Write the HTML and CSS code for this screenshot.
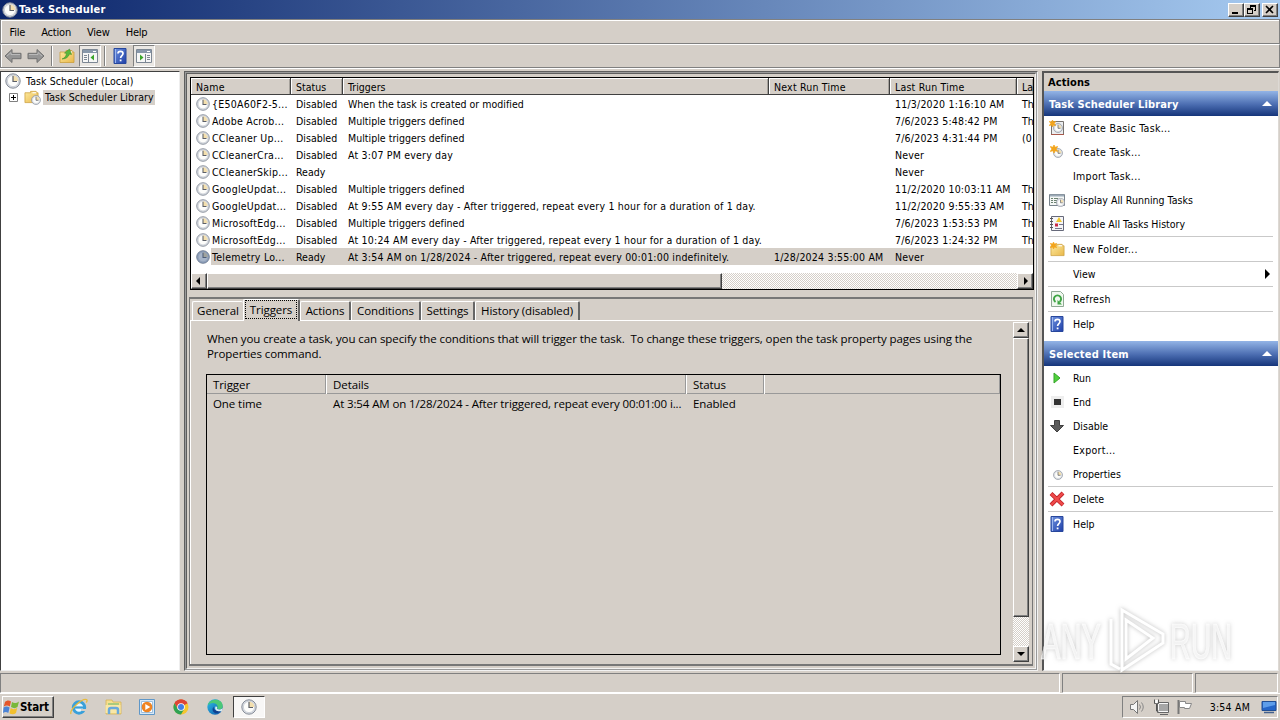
FILE: index.html
```html
<!DOCTYPE html>
<html lang="en">
<head>
    <meta charset="UTF-8">
    <meta name="viewport" content="width=device-width, initial-scale=1.0">
    <title>Task Scheduler</title>
    <link rel="stylesheet" href="styles.css">
</head>
<body>
    <!-- Shared icons -->
    <svg class="defs" width="0" height="0">
        <defs>
            <linearGradient id="folderFill" x1="0" y1="0" x2="1" y2="1"><stop offset="0" stop-color="#fdeaa0"/><stop offset="1" stop-color="#e9b84a"/></linearGradient>
            <linearGradient id="helpFill" x1="0" y1="0" x2="1" y2="1"><stop offset="0" stop-color="#6f93e0"/><stop offset="1" stop-color="#1f3fa8"/></linearGradient>
            <linearGradient id="edgeFill" x1="0" y1="0" x2="1" y2="1"><stop offset="0" stop-color="#2fc2e8"/><stop offset="1" stop-color="#0b4fa8"/></linearGradient>
        </defs>
        <symbol id="clock" viewBox="0 0 16 16">
            <circle cx="8" cy="8" r="7.2" fill="#d9dde4" stroke="#858b96"/>
            <circle cx="8" cy="8" r="5.6" fill="#fdfdfb" stroke="#b9bec8" stroke-width=".6"/>
            <path d="M8 8V2.6A5.4 5.4 0 0 1 13.4 8z" fill="#f3dfae"/>
            <path d="M8 3v5.5h4" fill="none" stroke="#5d6068" stroke-width="1.2"/>
        </symbol>
        <symbol id="help" viewBox="0 0 16 16">
            <path d="M2 .5h12v15H2z" fill="url(#helpFill)" stroke="#27479c"/>
            <path d="M3.5 1v14" stroke="#9db7ee"/>
            <path d="M6 5.6c0-3 5-3 5 0 0 2-2.4 2-2.4 4.4" fill="none" stroke="#fff" stroke-width="1.7"/>
            <path d="M7.7 11.5h1.8v1.8H7.7z" fill="#fff"/>
        </symbol>
        <symbol id="folder" viewBox="0 0 16 16">
            <path d="M1 4h6V2.5h6V4h2v10.5H1z" fill="url(#folderFill)" stroke="#cc9f3c" stroke-width=".8"/>
            <path d="M9 4h4" stroke="#fff" stroke-width="1.2"/>
        </symbol>
        <symbol id="star" viewBox="0 0 8 8">
            <path d="M4 0l1 2.3L7.7 1.6 6 4l1.7 2.4L5 5.7 4 8 3 5.7.3 6.4 2 4 .3 1.6 3 2.3z" fill="#f3a51c" stroke="#f3a51c" stroke-width=".8"/>
        </symbol>
        <symbol id="arrow" viewBox="0 0 18 16">
            <path d="M1 8l7-6.5v3.800h9v5.400H8v3.800z" fill="#959595" stroke="#707070"/>
            <path d="M3 8l4-3.500V6.500h9" fill="none" stroke="#b9b9b9"/>
        </symbol>
    </svg>

    <div class="screen">
        <div class="titlebar">
            <svg class="app-icon" width="16" height="16"><use href="#clock"/></svg>
            <h1>Task Scheduler</h1>
            <div class="win-buttons">
                <span class="win-btn"><svg width="14" height="12"><path d="M3 8h6v2H3z"/></svg></span>
                <span class="win-btn"><svg width="14" height="12"><path d="M5 1h6v6H9V6h1V3H6v1H5zM2 4h6v6H2zM3 6v3h4V6z" fill-rule="evenodd"/></svg></span>
                <span class="win-btn close"><svg width="14" height="12"><path d="M3 2l7 7M10 2L3 9" stroke="#000" stroke-width="1.6"/></svg></span>
            </div>
        </div>

        <nav class="menubar"><span>File</span><span>Action</span><span>View</span><span>Help</span></nav>

        <div class="toolbar">
            <svg width="18" height="16"><use href="#arrow"/></svg>
            <svg class="forward" width="18" height="16"><use href="#arrow"/></svg>
            <i class="tool-sep"></i>
            <svg class="up" width="16" height="16"><use href="#folder"/><path d="M3 11c3-1 4-3 4.500-5.500L5.500 5l5-4 2 5.500-2-.5C9.500 9 7 11 3 11z" fill="#58b83a" stroke="#38872a" stroke-width=".5"/></svg>
            <span class="tool-pressed"><svg width="18" height="16"><path d="M1.500 1.500h15v13h-15z" fill="#f6f6f6" stroke="#7c8794"/><path d="M2 2h14v3H2z" fill="#8797aa"/><path d="M12 3.500h3" stroke="#fff"/><path d="M7.500 6v8M3 7.500h3M3 9.500h3M3 11.500h3" stroke="#7c8794"/><path d="M13 6.500v6l-3.500-3z" fill="#3ba52c"/></svg></span>
            <i class="tool-sep second"></i>
            <svg class="help" width="16" height="16"><use href="#help"/></svg>
            <span class="tool-pressed"><svg width="18" height="16"><path d="M1.500 1.500h15v13h-15z" fill="#f6f6f6" stroke="#7c8794"/><path d="M2 2h14v3H2z" fill="#8797aa"/><path d="M12 3.500h3" stroke="#fff"/><path d="M10.500 6v8M12 7.500h3M12 9.500h3M12 11.500h3" stroke="#7c8794"/><path d="M5 6.500v6l3.500-3z" fill="#3ba52c"/></svg></span>
        </div>

        <main class="workspace">
            <aside class="tree">
                <div class="tree-root"><svg width="16" height="16"><use href="#clock"/></svg><span>Task Scheduler (Local)</span></div>
                <div class="tree-child">
                    <svg width="9" height="9"><path d="M.5.5h8v8h-8z" fill="#fff" stroke="#808080"/><path d="M2 4.500h5M4.500 2v5" stroke="#000"/></svg>
                    <svg class="lib" width="17" height="16"><use href="#folder" width="15" height="15"/><use href="#clock" x="7" y="6" width="10" height="10"/></svg>
                    <span>Task Scheduler Library</span>
                </div>
            </aside>

            <section class="center">
                <div class="task-list">
                    <div class="row head"><span>Name</span><span>Status</span><span>Triggers</span><span>Next Run Time</span><span>Last Run Time</span><span>La</span></div>
                    <div class="row"><span><svg width="14" height="14"><use href="#clock"/></svg>{E50A60F2-5...</span><span>Disabled</span><span>When the task is created or modified</span><span></span><span>11/3/2020 1:16:10 AM</span><span>Th</span></div>
                    <div class="row"><span><svg width="14" height="14"><use href="#clock"/></svg>Adobe Acrob...</span><span>Disabled</span><span>Multiple triggers defined</span><span></span><span>7/6/2023 5:48:42 PM</span><span>Th</span></div>
                    <div class="row"><span><svg width="14" height="14"><use href="#clock"/></svg>CCleaner Up...</span><span>Disabled</span><span>Multiple triggers defined</span><span></span><span>7/6/2023 4:31:44 PM</span><span>(0</span></div>
                    <div class="row"><span><svg width="14" height="14"><use href="#clock"/></svg>CCleanerCra...</span><span>Disabled</span><span class="schedule">At 3:07 PM every day</span><span></span><span>Never</span><span></span></div>
                    <div class="row"><span><svg width="14" height="14"><use href="#clock"/></svg>CCleanerSkip...</span><span>Ready</span><span></span><span></span><span>Never</span><span></span></div>
                    <div class="row"><span><svg width="14" height="14"><use href="#clock"/></svg>GoogleUpdat...</span><span>Disabled</span><span>Multiple triggers defined</span><span></span><span>11/2/2020 10:03:11 AM</span><span>Th</span></div>
                    <div class="row"><span><svg width="14" height="14"><use href="#clock"/></svg>GoogleUpdat...</span><span>Disabled</span><span class="schedule">At 9:55 AM every day - After triggered, repeat every 1 hour for a duration of 1 day.</span><span></span><span>11/2/2020 9:55:33 AM</span><span>Th</span></div>
                    <div class="row"><span><svg width="14" height="14"><use href="#clock"/></svg>MicrosoftEdg...</span><span>Disabled</span><span>Multiple triggers defined</span><span></span><span>7/6/2023 1:53:53 PM</span><span>Th</span></div>
                    <div class="row"><span><svg width="14" height="14"><use href="#clock"/></svg>MicrosoftEdg...</span><span>Disabled</span><span class="schedule">At 10:24 AM every day - After triggered, repeat every 1 hour for a duration of 1 day.</span><span></span><span>7/6/2023 1:24:32 PM</span><span>Th</span></div>
                    <div class="row selected"><span><svg width="14" height="14"><use href="#clock"/><circle cx="7" cy="7" r="6.500" fill="#3c5a8c" opacity=".45"/></svg>Telemetry Lo...</span><span>Ready</span><span class="schedule">At 3:54 AM on 1/28/2024 - After triggered, repeat every 00:01:00 indefinitely.</span><span>1/28/2024 3:55:00 AM</span><span>Never</span><span></span></div>
                    <div class="hscroll">
                        <span class="sbtn"><svg width="12" height="12"><path d="M7 2v8L3 6z"/></svg></span>
                        <span class="thumb"></span>
                        <span class="sbtn"><svg width="12" height="12"><path d="M5 2v8l4-4z"/></svg></span>
                    </div>
                </div>

                <div class="details">
                    <div class="tabs"><span class="tab general">General</span><span class="tab active"><b>Triggers</b></span><span class="tab actions-tab">Actions</span><span class="tab conditions">Conditions</span><span class="tab settings">Settings</span><span class="tab history">History (disabled)</span></div>
                    <div class="tab-page">
                        <div class="page-body">
                            <p><span>When you create a task, you can specify the conditions that will trigger the task.&nbsp; To change these triggers, open the task property pages using the</span><br>Properties command.</p>
                            <div class="trigger-table">
                                <div class="trow thead"><span>Trigger</span><span>Details</span><span>Status</span><span></span></div>
                                <div class="trow"><span>One time</span><span class="when">At 3:54 AM on 1/28/2024 - After triggered, repeat every 00:01:00 i...</span><span>Enabled</span><span></span></div>
                            </div>
                        </div>
                        <div class="vscroll">
                            <span class="sbtn"><svg width="12" height="12"><path d="M2 8h8L6 4z"/></svg></span>
                            <span class="thumb"></span>
                            <span class="sbtn"><svg width="12" height="12"><path d="M2 4h8L6 8z"/></svg></span>
                        </div>
                    </div>
                </div>
            </section>

            <aside class="actions">
                <div class="actions-title">Actions</div>
                <div class="group-head"><span>Task Scheduler Library</span><svg width="10" height="6"><path d="M0 5l5-5 5 5z" fill="#fff"/></svg></div>
                <ul>
                    <li><svg width="16" height="16"><path d="M2.500 1.500h12v13h-12z" fill="#eceef0" stroke="#77736f"/><path d="M2 14.500h13" stroke="#a9594b"/><use href="#clock" x="4" y="3" width="10" height="10"/><use href="#star" width="7" height="7"/></svg><span class="dots">Create Basic Task...</span></li>
                    <li><svg width="16" height="16"><use href="#clock" x="4" y="4" width="10" height="10"/><use href="#star" x="1" y="1" width="8" height="8"/></svg><span class="dots">Create Task...</span></li>
                    <li><i></i><span class="dots">Import Task...</span></li>
                    <li><svg width="16" height="16"><path d="M.5 2.500h15v11H.5z" fill="#f4f7f5" stroke="#78838c"/><path d="M1 3.500h14" stroke="#9ba9b6" stroke-width="2"/><path d="M2 6.500h2M5 6.500h4M2 8.500h2M5 8.500h3M2 10.500h2M5 10.500h3" stroke="#6c8271"/><use href="#clock" x="7" y="6" width="9" height="9"/></svg><span>Display All Running Tasks</span></li>
                    <li><svg width="16" height="16"><path d="M2.500.5h12v14h-12z" fill="#f5f5f7" stroke="#66697a"/><path d="M1 2.500h3M1 5.500h3M1 8.500h3M1 11.500h3" stroke="#555"/><path d="M10 1l3 5H7z" fill="#f1c82f"/><path d="M6 7.500h3v3H6z" fill="#c82b44"/><path d="M10 8.500h4M6 12.500h7" stroke="#77778a"/></svg><span>Enable All Tasks History</span></li>
                    <li class="line"><svg width="16" height="16"><use href="#folder" x="1" y="1" width="15" height="15"/><use href="#star" x="1" y="1" width="7" height="7"/></svg><span class="dots">New Folder...</span></li>
                    <li class="line"><i></i><span>View</span><svg class="sub" width="5" height="10"><path d="M0 0l5 5-5 5z"/></svg></li>
                    <li class="line"><svg width="16" height="16"><path d="M2.500.5h9l3 3v12h-12z" fill="#f0f8ef" stroke="#8fa894"/><path d="M6.500 11a3.600 3.600 0 1 1 4 0" fill="none" stroke="#3da443" stroke-width="1.900"/><path d="M8.500 9v4.500h4.500z" fill="#3da443"/></svg><span class="dots">Refresh</span></li>
                    <li class="line"><svg width="16" height="16"><use href="#help"/></svg><span>Help</span></li>
                </ul>
                <div class="group-head second"><span>Selected Item</span><svg width="10" height="6"><path d="M0 5l5-5 5 5z" fill="#fff"/></svg></div>
                <ul>
                    <li><svg width="16" height="16"><path d="M5 3l6 5-6 5z" fill="#4fd13c" stroke="#36a52a"/></svg><span>Run</span></li>
                    <li><svg width="16" height="16"><path d="M2 2h13v12H2z" fill="#eeeeee"/><path d="M5 5h7v6H5z" fill="#333"/></svg><span>End</span></li>
                    <li><svg width="16" height="16"><path d="M5.500 2.500h5v5h4L8 14 1.500 7.500h4z" fill="#5b5b5b" stroke="#404040"/></svg><span>Disable</span></li>
                    <li><i></i><span class="dots">Export...</span></li>
                    <li><svg width="16" height="16"><use href="#clock" x="4" y="4" width="10" height="10"/></svg><span>Properties</span></li>
                    <li class="line"><svg width="16" height="16"><path d="M2 2.500L14 14M14 2L2 14" stroke="#b91c22" stroke-width="4"/><path d="M2.200 2.700L13.800 13.800M13.800 2.200L2.200 13.800" stroke="#ee4a4a" stroke-width="2.600"/></svg><span>Delete</span></li>
                    <li class="line"><svg width="16" height="16"><use href="#help"/></svg><span>Help</span></li>
                </ul>
            </aside>
        </main>

        <footer class="statusbar"><span></span><span></span><span></span></footer>

        <div class="taskbar">
            <div class="start"><svg width="17" height="16"><path d="M2 3c2-2 4-2 6-.5L6.800 7.500C5 6 3 6 .8 7.500z" fill="#e4562b"/><path d="M9 3c2 1.500 4 1.500 7-.5L14.500 8c-2 1.500-4 1.500-6.500 0z" fill="#78b83a"/><path d="M.6 8.600c2-1.600 4-1.300 6 0L5.300 14C3.500 12.600 2 12.600 0 14z" fill="#4b83d6"/><path d="M7.700 9c2 1.500 4 1.500 6.500 0L13 14c-2 1.500-4 1.500-6.500.5z" fill="#f2c02e"/></svg><span>Start</span></div>
            <svg class="launch" width="18" height="18"><circle cx="9" cy="9.500" r="5.700" fill="#eaf6fd" stroke="#3aa0da" stroke-width="3"/><path d="M4 9.500h11" stroke="#3aa0da" stroke-width="2.200"/><path d="M1 16C-1 12 12 0 16.500 1.500c1 .5.5 2-.3 3" fill="none" stroke="#e8bb3c" stroke-width="1.300"/><path d="M11 12h5" stroke="#d5cfc8" stroke-width="2"/></svg>
            <svg class="launch" width="18" height="18"><path d="M2 2h6l1 2h8v12H2z" fill="#f6df8e" stroke="#d5b357" stroke-width=".8"/><path d="M4 5h11v4H4z" fill="#aacb7c"/><path d="M1.500 7h15v8h-15z" fill="#f8e7a6"/><path d="M5 16v-4q0-2 2-2h5q2 0 2 2v4" fill="none" stroke="#68a9dc" stroke-width="2.500"/></svg>
            <svg class="launch" width="18" height="18"><path d="M1.500 1.500h15v15h-15z" fill="#d8e9f7" stroke="#5f97c8"/><path d="M3.500 3.500h11v11h-11z" fill="#fff" stroke="#9dbfdd"/><circle cx="9" cy="9" r="5.300" fill="#ef8422"/><path d="M7.300 6l5 3-5 3z" fill="#fff"/></svg>
            <svg class="launch" width="18" height="18"><circle cx="9" cy="9" r="7.500" fill="#f5c62f"/><path d="M9 9L2.500 5.200A7.500 7.500 0 0 1 15.500 5.200z" fill="#dd4436"/><path d="M9 5.200h6.500A7.500 7.500 0 0 0 2.500 5.200L5.700 11z" fill="#dd4436"/><path d="M2.500 5.200A7.500 7.500 0 0 0 9 16.500l3.200-5.600H5.800z" fill="#2fa253"/><circle cx="9" cy="9" r="3.800" fill="#fff"/><circle cx="9" cy="9" r="3" fill="#427fe5"/></svg>
            <svg class="launch" width="18" height="18"><circle cx="9" cy="9" r="7.700" fill="url(#edgeFill)"/><path d="M2 6C5 0 17 0 16.700 8.500c0 3-4 3.500-5.700 2 2-2.500-1-5.500-4-5.500Q4 5 2 7z" fill="#4bc878"/><path d="M8 8.500c-1.500 3 3 5.500 7 3.800-1 1.500-2 2.500-3.500 3C7 16 5 11 8 8.500z" fill="#10408f"/><path d="M9.500 8.500c2-.5 2 1.500 1.300 2.300 2 1.300 4.700.7 6-.8l-1 3c-3 1-8 0-6.300-4.500z" fill="#d9eef5"/></svg>
            <div class="task-btn"><svg width="16" height="16"><use href="#clock"/></svg></div>
            <div class="tray">
                <svg width="17" height="16"><path d="M1.500 5.500h3l4-4v13l-4-4h-3z" fill="#f5f5f5" stroke="#777"/><path d="M10.500 5.500q2 2.500 0 5M12.500 3.500q3.500 4.500 0 9" fill="none" stroke="#888"/></svg>
                <svg width="17" height="16"><path d="M5.500 4.500h10v8h-10z" fill="#a6a6a6" stroke="#f8f8f8"/><path d="M4.500 3.500h11v10h-11z" fill="none" stroke="#666"/><path d="M7 15.500h8" stroke="#666"/><path d="M1.500.5v4h4v-4M3.500 5v7h2" fill="none" stroke="#555"/><path d="M2.500 1v3h2V1" fill="#fff" stroke="#fff" stroke-width=".5"/></svg>
                <svg width="17" height="16"><path d="M1.500 1v14" stroke="#777" stroke-width="2"/><path d="M2.500 2.500h6v2h6l-2 5h-5v-1h-5z" fill="#fff" stroke="#888"/></svg>
                <time>3:54 AM</time>
                <svg width="16" height="16"><path d="M1 2.500h14v9H1z" fill="#2465c8" stroke="#204e94"/><path d="M2 3h12v3L2 9z" fill="#5d9dea"/><path d="M3 13.500h10" stroke="#43608d" stroke-width="1.500"/></svg>
            </div>
        </div>

        <svg class="watermark" width="230" height="72">
            <text x="1" y="54" textLength="60" lengthAdjust="spacingAndGlyphs">ANY</text>
            <path d="M82 5L123 29v9L82 65zM71 14v45l9 5M86 15l27 18-27 21z"/>
            <text x="130" y="54" textLength="62" lengthAdjust="spacingAndGlyphs">RUN</text>
        </svg>
    </div>
</body>
</html>
```
FILE: styles.css
```css
* {
    margin: 0;
    padding: 0;
    box-sizing: border-box;
}

:root {
    --face: #d5cfc8;
    --dark: #808080;
    --darker: #404040;
}

body {
    font-family: 'DejaVu Sans Condensed', 'DejaVu Sans', sans-serif;
    font-stretch: condensed;
    font-size: 10.5px;
    letter-spacing: 0.02px;
    color: #000;
    background: var(--face);
    overflow: hidden;
}

svg {
    display: block;
    flex: none;
}

.defs {
    position: absolute;
}

.screen {
    position: relative;
    width: 1280px;
    height: 720px;
    display: flex;
    flex-direction: column;
    background: var(--face);
    white-space: nowrap;
}

/* Title bar */
.titlebar {
    height: 19px;
    flex: none;
    display: flex;
    align-items: center;
    padding: 0 2px;
    background: linear-gradient(90deg, #0a246a, #a6caf0);
}

.titlebar h1 {
    margin-left: 1px;
    color: #fff;
    font-size: 11px;
    letter-spacing: 0.2px;
    flex: 1;
}

.win-buttons {
    display: flex;
}

.win-btn {
    width: 16px;
    height: 14px;
    background: var(--face);
    border: 1px solid;
    border-color: #fff var(--darker) var(--darker) #fff;
    box-shadow: inset -1px -1px var(--dark);
    overflow: hidden;
}

.win-btn.close {
    margin-left: 2px;
}

/* Menu and toolbar */
.menubar {
    height: 25px;
    flex: none;
    display: flex;
    align-items: center;
    gap: 16px;
    padding: 1px 8.5px 0;
    border: 1px solid var(--dark);
    box-shadow: inset 1px 1px #fff;
    font-size: 11px;
    letter-spacing: -0.2px;
}

.toolbar {
    height: 24px;
    flex: none;
    display: flex;
    align-items: center;
    padding-left: 3px;
    border: 1px solid var(--dark);
    border-top-color: #fff;
    box-shadow: inset 1px 0 #fff;
}

.forward {
    margin-left: 5px;
    transform: scaleX(-1);
}

.tool-sep {
    width: 2px;
    height: 20px;
    margin: 0 6px 0 6px;
    border-left: 1px solid var(--dark);
    border-right: 1px solid #fff;
}

.toolbar .up {
    margin-right: 4px;
}

.tool-pressed {
    width: 22px;
    height: 22px;
    padding: 2px 1px;
    background: #eae7e3;
    border: 1px solid;
    border-color: var(--dark) #fff #fff var(--dark);
}

.tool-sep.second {
    margin: 0 6px 0 3px;
}

.toolbar .help {
    margin-right: 5px;
}

/* Three panes */
.workspace {
    height: 603px;
    flex: none;
    display: grid;
    grid-template-columns: 180px 854px 237px;
    column-gap: 4px;
    padding-top: 2px;
    border-top: 1px solid #fff;
}

.tree {
    background: #fff;
    border: 1px solid var(--darker);
    border-right-color: #eee;
    border-bottom-color: #eee;
    padding-top: 1px;
}

.tree-root,
.tree-child {
    height: 16px;
    display: flex;
    align-items: center;
    letter-spacing: 0.1px;
}

.tree-root {
    padding-left: 4px;
}

.tree-root span {
    margin-left: 5px;
}

.tree-child {
    padding-left: 8px;
}

.tree-child .lib {
    margin-left: 6px;
}

.tree-child span {
    height: 15px;
    line-height: 15px;
    margin-left: 2px;
    padding: 0 1px 0 2px;
    background: var(--face);
}

.center {
    border: 3px solid #5e5e5e;
    border-right-color: #f2f2f2;
    border-bottom-color: #f2f2f2;
    outline: 1px solid #9a9a9a;
    outline-offset: -2px;
    padding: 3px 2px 0 2px;
    min-width: 0;
}

.task-list {
    width: 844px;
    height: 213px;
    margin-left: 1px;
    border: 1px solid #000;
    background: #fff;
    overflow: hidden;
}

.row {
    height: 17px;
    display: grid;
    grid-template-columns: 100px 52px 426px 121px 127px 16px;
    align-items: center;
}

.row span {
    height: 17px;
    line-height: 18px;
    padding-left: 5px;
    overflow: hidden;
}

.row span:first-child {
    display: flex;
    align-items: center;
    gap: 2px;
    letter-spacing: 0.25px;
}

.row .schedule,
.row span:nth-child(4),
.row span:nth-child(5) {
    letter-spacing: 0.2px;
}

.row.head {
    background: var(--face);
    border-bottom: 1px solid var(--darker);
    box-shadow: inset 0 1px #fff;
}

.row.head span {
    height: 16px;
    border-right: 1px solid var(--darker);
    box-shadow: inset 1px 1px #fff, inset -1px 0 #a5a19b;
}

.row.head span:first-child {
    display: block;
}

.row.head span:last-child {
    border: 0;
}

.row.selected {
    background: linear-gradient(90deg, #fff 20px, var(--face) 20px);
}

.hscroll,
.vscroll {
    display: flex;
    background: repeating-conic-gradient(#fff 0 25%, var(--face) 0 50%) 0 0 / 2px 2px;
}

.hscroll {
    height: 16px;
    margin-top: 8px;
}

.sbtn,
.thumb {
    background: var(--face);
    border: 1px solid;
    border-color: #fff var(--darker) var(--darker) #fff;
    box-shadow: inset -1px -1px var(--dark);
}

.sbtn {
    width: 16px;
    height: 16px;
    padding: 1px;
    flex: none;
}

.hscroll .thumb {
    width: 515px;
}

.hscroll .sbtn:last-child {
    margin-left: auto;
}

/* Task details */
.details {
    height: 369px;
    margin-top: 7px;
    border: 1px solid #777;
    border-width: 2px 1px;
    font-family: 'Open Sans', 'Noto Sans', sans-serif;
    font-stretch: normal;
    font-size: 11.5px;
    letter-spacing: -0.08px;
}

.tabs {
    height: 22px;
    padding-left: 2px;
    display: flex;
    align-items: flex-end;
    border-bottom: 1px solid #fff;
}

.tab {
    height: 19px;
    line-height: 18px;
    text-align: center;
    border-top: 1px solid #fff;
    border-left: 1px solid #fff;
    border-right: 2px solid #666;
    border-radius: 2px 2px 0 0;
}

.general { width: 51px; border-right: 0; }
.actions-tab { width: 51px; }
.conditions { width: 70px; }
.settings { width: 54px; }
.history { width: 105px; }

.tab.active {
    width: 57px;
    height: 22px;
    margin-bottom: -1px;
    background: var(--face);
}

.tab.active b {
    display: block;
    margin: 0 1px;
    height: 19px;
    line-height: 17px;
    font-weight: normal;
    border: 1px dotted #000;
}

.tab-page {
    height: 343px;
    display: flex;
    border-left: 1px solid #fff;
}

.page-body {
    flex: 1;
    padding: 10px 0 0 15px;
}

.page-body p {
    line-height: 15px;
    height: 43px;
    padding-left: 1px;
}

.trigger-table {
    width: 795px;
    height: 281px;
    border: 1px solid #000;
}

.trow {
    display: grid;
    grid-template-columns: 120px 360px 78px 1fr;
    line-height: 20px;
}

.trow span {
    padding-left: 6px;
}

.trow .when {
    letter-spacing: -0.12px;
}

.trow.thead {
    height: 19px;
    line-height: 19px;
    border-bottom: 1px solid #fff;
}

.trow.thead span {
    border-right: 1px solid #fff;
    box-shadow: inset -1px -1px #999;
}

.trow.thead span:last-child {
    border-right: 0;
}

.vscroll {
    width: 16px;
    margin: 1px 3px 2px 0;
    flex-direction: column;
}

.vscroll .thumb {
    height: 279px;
}

.vscroll .sbtn:last-child {
    margin-top: auto;
}

/* Actions pane */
.actions {
    background: #fff;
    border-left: 2px solid #555;
    border-top: 2px solid #555;
    border-right: 1px solid #ddd9d4;
    border-bottom: 1px solid #eee;
}

.actions-title {
    height: 18px;
    line-height: 19px;
    padding-left: 4px;
    background: var(--face);
    font-size: 11px;
    font-weight: bold;
    letter-spacing: 0.1px;
}

.group-head {
    height: 25px;
    display: flex;
    align-items: center;
    justify-content: space-between;
    padding: 1px 6px 0 5px;
    color: #fff;
    font-size: 11px;
    font-weight: bold;
    letter-spacing: 0.12px;
    background: linear-gradient(#93b4e6, #4a6cb0 55%, #15357a);
}

.group-head.second {
    margin-top: 5px;
    letter-spacing: 0.2px;
}

.actions ul {
    list-style: none;
    padding: 0 5px 0 4px;
}

.actions li {
    height: 24px;
    display: flex;
    align-items: center;
    padding-left: 1px;
}

.actions li.line {
    height: 25px;
    border-top: 1px solid #c9c9c9;
}

.actions li i {
    width: 16px;
}

.actions li span {
    margin-left: 8px;
}

.actions li .dots {
    letter-spacing: 0.3px;
}

.actions .sub {
    margin: 0 3px 0 auto;
}

/* Status bar and taskbar */
.statusbar {
    height: 20px;
    margin-top: 2px;
    flex: none;
    display: grid;
    grid-template-columns: 1060px 131px 83px;
    gap: 2px;
}

.statusbar span {
    border: 1px solid;
    border-color: var(--dark) #fff #fff var(--dark);
}

.taskbar {
    flex: 1;
    display: flex;
    align-items: center;
    border-top: 1px solid #fff;
    padding: 0 2px;
}

.start {
    width: 52px;
    height: 22px;
    display: flex;
    align-items: center;
    border: 1px solid;
    border-color: #fff var(--darker) var(--darker) #fff;
    box-shadow: inset -1px -1px var(--dark);
    font-weight: bold;
    font-size: 11.5px;
    letter-spacing: -0.1px;
}

.launch {
    margin-left: 16px;
}

.task-btn {
    width: 32px;
    height: 22px;
    margin-left: 9px;
    padding: 2px 7px;
    background: #f8f7f6;
    border: 1px solid;
    border-color: var(--darker) #fff #fff var(--darker);
}

.tray {
    width: 156px;
    height: 22px;
    margin-left: auto;
    display: flex;
    align-items: center;
    padding-left: 6px;
    gap: 7px;
    border: 1px solid;
    border-color: var(--dark) #fff #fff var(--dark);
}

.tray time {
    flex: 1;
    margin-right: 4px;
    text-align: right;
    letter-spacing: 0.2px;
}

.watermark {
    position: absolute;
    left: 1040px;
    top: 605px;
    fill: rgba(255, 255, 255, 0.65);
    stroke: #fff;
    stroke-width: 2;
    overflow: visible;
    filter: drop-shadow(0 0 2px rgba(120, 120, 120, 0.5));
}

.watermark text {
    font: 50px 'Liberation Sans Narrow', 'Liberation Sans', sans-serif;
    letter-spacing: 0;
    stroke-width: 0.5;
}

.watermark path {
    fill: none;
    stroke-width: 3;
}
```
